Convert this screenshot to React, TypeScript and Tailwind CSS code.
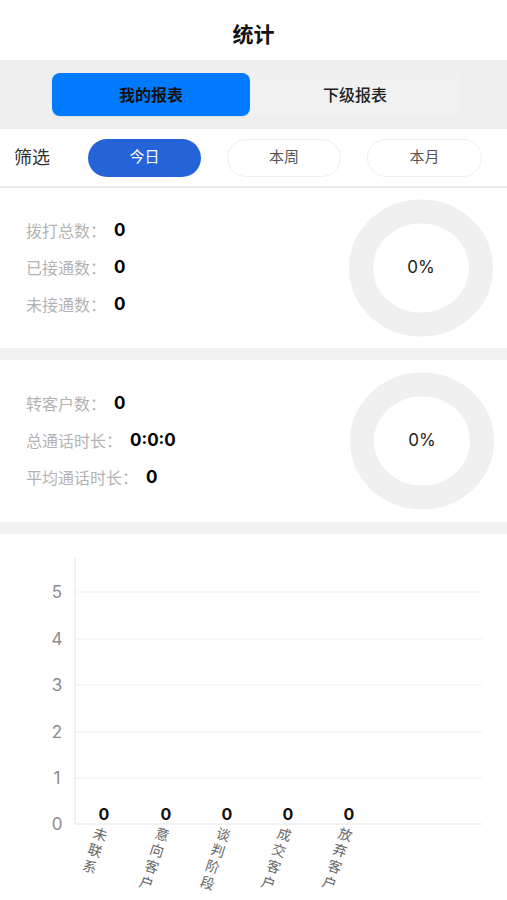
import React from "react";

const font = { fontFamily: '"Inter", "Noto Sans CJK SC", sans-serif' };

function Donut() {
  return (
    <div className="relative w-[160px] h-[150px] flex items-center justify-center">
      <svg width="160" height="150" viewBox="0 0 160 150" className="absolute inset-0">
        <ellipse cx="80" cy="75" rx="60" ry="56.5" fill="none" stroke="#f0f0f0" strokeWidth="24" />
      </svg>
      <span className="relative text-[17px] text-[#222]">0%</span>
    </div>
  );
}

function StatRow({ label, value }: { label: string; value: string }) {
  return (
    <div className="flex items-center h-[37px]">
      <span className="text-[16px] text-[#b3b3b3]">{label}</span>
      <span className="ml-[8px] text-[17px] font-bold text-black">{value}</span>
    </div>
  );
}

function Chart() {
  const grid = [
    { v: "5", y: 58 },
    { v: "4", y: 105 },
    { v: "3", y: 151 },
    { v: "2", y: 198 },
    { v: "1", y: 244 },
    { v: "0", y: 290 },
  ];
  const cats = [
    { x: 104, label: "未联系" },
    { x: 166, label: "意向客户" },
    { x: 227, label: "谈判阶段" },
    { x: 288, label: "成交客户" },
    { x: 349, label: "放弃客户" },
  ];
  return (
    <svg width="507" height="366" viewBox="0 0 507 366" style={font}>
      {grid.map((g) => (
        <g key={g.v}>
          <line x1="75" x2="482" y1={g.y} y2={g.y} stroke={g.v === "0" ? "#e6e6e6" : "#efefef"} strokeWidth="1.2" />
          <text x="57" y={g.y + 6} textAnchor="middle" fontSize="17" fill="#8c8c8c">
            {g.v}
          </text>
        </g>
      ))}
      <line x1="75" x2="75" y1="24" y2="290" stroke="#e8e8e8" strokeWidth="1.2" />
      {cats.map((c) => (
        <g key={c.label}>
          <text x={c.x} y="286" textAnchor="middle" fontSize="16" fontWeight="700" fill="#111">
            0
          </text>
          <g transform={`translate(${c.x - 1}, 292) rotate(18)`}>
            {c.label.split("").map((ch, i) => (
              <text key={i} x="0" y={14 + i * 17} textAnchor="middle" fontSize="14" fill="#666">
                {ch}
              </text>
            ))}
          </g>
        </g>
      ))}
    </svg>
  );
}

export default function App() {
  return (
    <div className="w-[507px] h-[900px] overflow-hidden bg-white" style={font}>
      {/* Header */}
      <div className="h-[60px] flex items-center justify-center pt-[10px]">
        <span className="text-[21px] font-semibold text-[#111]">统计</span>
      </div>

      {/* Segment */}
      <div className="h-[69px] bg-[#efefef] flex items-center pl-[52px]">
        <div className="w-[198px] h-[43px] rounded-[8px] bg-[#007aff] flex items-center justify-center shadow-[0_1px_2px_rgba(0,0,0,0.08)]">
          <span className="text-[16px] font-semibold text-[#111]">我的报表</span>
        </div>
        <div className="w-[210px] h-[43px] bg-[#f1f1f1] flex items-center justify-center">
          <span className="text-[16px] font-medium text-[#222]">下级报表</span>
        </div>
      </div>

      {/* Filter */}
      <div className="h-[57px] flex items-center pl-[14px]">
        <span className="text-[18px] text-[#333] w-[74px]">筛选</span>
        <div className="flex gap-[26px]">
          <div className="w-[113px] h-[38px] rounded-full bg-[#2563d8] flex items-center justify-center">
            <span className="text-[15px] text-white">今日</span>
          </div>
          <div className="w-[114px] h-[38px] rounded-full border border-[#f0f0f0] flex items-center justify-center">
            <span className="text-[15px] text-[#555]">本周</span>
          </div>
          <div className="w-[115px] h-[38px] rounded-full border border-[#f0f0f0] flex items-center justify-center">
            <span className="text-[15px] text-[#555]">本月</span>
          </div>
        </div>
      </div>
      <div className="h-[2px] bg-[#e9e9e9]" />

      {/* Card 1 */}
      <div className="h-[160px] flex items-center justify-between pl-[26px] pr-[6px]">
        <div className="flex flex-col">
          <StatRow label="拨打总数：" value="0" />
          <StatRow label="已接通数：" value="0" />
          <StatRow label="未接通数：" value="0" />
        </div>
        <Donut />
      </div>
      <div className="h-[12px] bg-[#f2f2f2]" />

      {/* Card 2 */}
      <div className="h-[162px] flex items-center justify-between pl-[26px] pr-[5px]">
        <div className="flex flex-col">
          <StatRow label="转客户数：" value="0" />
          <StatRow label="总通话时长：" value="0:0:0" />
          <StatRow label="平均通话时长：" value="0" />
        </div>
        <Donut />
      </div>
      <div className="h-[12px] bg-[#f2f2f2]" />

      {/* Chart */}
      <Chart />
    </div>
  );
}
